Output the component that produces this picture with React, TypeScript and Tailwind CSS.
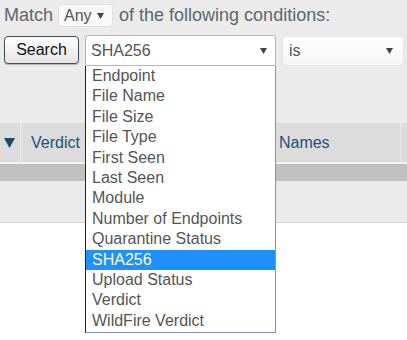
const fields = [
  "Endpoint",
  "File Name",
  "File Size",
  "File Type",
  "First Seen",
  "Last Seen",
  "Module",
  "Number of Endpoints",
  "Quarantine Status",
  "SHA256",
  "Upload Status",
  "Verdict",
  "WildFire Verdict",
];

function Caret({ className }: { className?: string }) {
  return (
    <svg width="7" height="6" viewBox="0 0 7 6" className={className}>
      <path d="M0 0 H7 L3.5 6 Z" fill="#444" />
    </svg>
  );
}

export default function App() {
  const selected = "SHA256";

  return (
    <div className="w-[407px] h-[340px] bg-white overflow-hidden font-['Liberation_Sans',Arial,sans-serif]">
      <div className="h-[123px] bg-[#ebebeb] pl-[4px]">
        <div className="flex items-center h-[23px] pt-[4px] box-content text-[18px] text-[#5d6770]">
          <span>Match</span>
          <div className="ml-[5px] w-[55px] h-[23px] flex items-center pl-[5px] pr-[8px] justify-between bg-[#f9f9f9] border border-[#e2e2e2] rounded-[3px] text-[16px] text-[#555]">
            <span>Any</span>
            <Caret />
          </div>
          <span className="ml-[6px]">of the following conditions:</span>
        </div>

        <div className="flex items-start mt-[8px]">
          <button className="mt-[1px] w-[75px] h-[28px] rounded-[4px] border border-[#3f4d5a] bg-gradient-to-b from-white to-[#e4e4e4] shadow-[0_1px_1px_rgba(0,0,0,0.25)] text-[16px] text-[#111] leading-none">
            Search
          </button>

          <div className="relative z-10 ml-[6px]">
            <div className="w-[191px] h-[31px] flex items-center justify-between pl-[5px] pr-[8px] bg-white border border-[#9ab8ea] rounded-t-[3px] text-[16px] text-[#555]">
              <span>SHA256</span>
              <Caret />
            </div>
            <ul className="absolute left-0 top-full w-[191px] bg-white border-l border-l-[#222] border-r border-r-[#8391bb] border-b border-b-[#8391bb] pb-[1px]">
              {fields.map((f) => (
                <li
                  key={f}
                  className={
                    f === selected
                      ? "h-[20.4px] leading-[20.4px] pl-[6px] text-[16px] bg-[#1e90ff] text-white"
                      : "h-[20.4px] leading-[20.4px] pl-[6px] text-[16px] text-[#555]"
                  }
                >
                  {f}
                </li>
              ))}
            </ul>
          </div>

          <div className="ml-[6px] mt-[1px] w-[122px] h-[30px] flex items-center justify-between pl-[6px] pr-[10px] bg-gradient-to-b from-white to-[#f5f5f5] border border-[#e6e6e6] rounded-[3px] text-[16px] text-[#555]">
            <span>is</span>
            <Caret />
          </div>
        </div>
      </div>

      <div className="h-[39px] bg-[#dcdcdc] flex items-center text-[16px] text-[#1f4f7a]">
        <div className="w-[21px] h-full flex items-center justify-center border-r border-r-[#ececec] pr-[2px]">
          <svg width="11" height="10" viewBox="0 0 11 10">
            <path d="M0 0 H11 L5.5 10 Z" fill="#1b4a6b" />
          </svg>
        </div>
        <span className="ml-[10px]">Verdict</span>
        <span className="ml-[199px]">Names</span>
        <div className="ml-auto w-[7px] h-full border-l border-l-[#ececec]" />
      </div>
      <div className="h-[2px] bg-[#f2f2f2]" />
      <div className="h-[17px] bg-[#c0c0c0]" />
      <div className="h-[42px] bg-[#ebebeb] border-b border-b-[#d2d2d2]" />
    </div>
  );
}
